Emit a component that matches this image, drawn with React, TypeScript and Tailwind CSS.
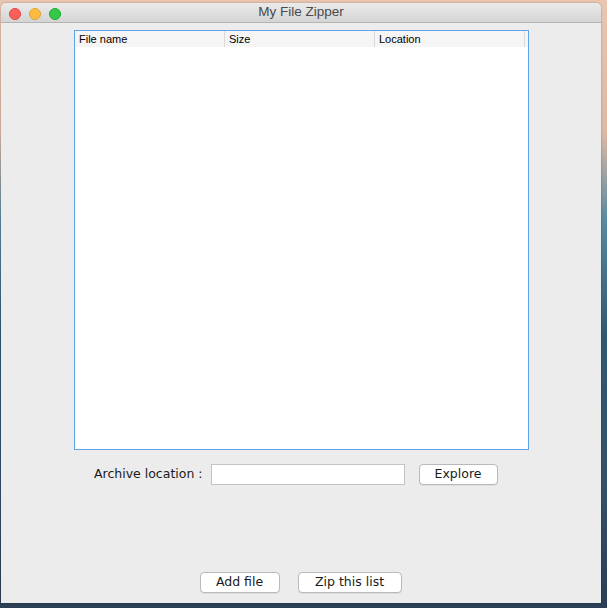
const columns = ['File name', 'Size', 'Location'];

const TrafficLights = () => (
  <div className="absolute left-[8px] top-[5px] flex gap-[8px]">
    <span className="h-[12px] w-[12px] rounded-full border border-[#e0443e] bg-[#fc605c]" />
    <span className="h-[12px] w-[12px] rounded-full border border-[#dea236] bg-[#fdbc40]" />
    <span className="h-[12px] w-[12px] rounded-full border border-[#1aab29] bg-[#34c84a]" />
  </div>
);

const MacButton = ({ label, width }: { label: string; width: string }) => (
  <button
    className={`${width} h-[21px] rounded-[4px] border border-[#b9b9b9] bg-white font-['DejaVu_Sans',sans-serif] text-[12.5px] leading-none text-[#1a1a1a] shadow-[0_1px_0_rgba(0,0,0,0.06)]`}
  >
    {label}
  </button>
);

export default function App() {
  return (
    <div
      className="h-[608px] w-[607px] overflow-hidden bg-[linear-gradient(to_bottom,#e9c6b0_0%,#dcb8a5_22%,#5a8aa0_36%,#2f5a72_55%,#34506a_80%,#2b3f55_100%)]"
      style={{ fontFamily: '"Liberation Sans", Arial, sans-serif' }}
    >
      <div className="ml-[1px] mt-[3px] flex h-[600px] w-[600px] flex-col overflow-hidden rounded-t-[5px] bg-[#ececec] shadow-[0_0_2px_rgba(0,0,0,0.35)]">
        {/* title bar */}
        <div className="relative flex h-[20px] shrink-0 items-center justify-center border-b border-[#b4b4b4] bg-[linear-gradient(to_bottom,#ebebeb,#d4d4d4)]">
          <TrafficLights />
          <span className="text-[13.5px] text-[#4a4a4a]">My File Zipper</span>
        </div>

        {/* table */}
        <div className="ml-[73px] mt-[7px] h-[420px] w-[455px] border border-[#5ea4ea] bg-white">
          <div className="flex h-[16px] bg-[#f5f5f5]">
            {columns.map((c) => (
              <div
                key={c}
                className="flex w-[150px] items-center border-r border-[#dadada] pl-[4px] text-[11px] leading-none text-black"
              >
                {c}
              </div>
            ))}
          </div>
        </div>

        {/* archive location row */}
        <div className="ml-[93px] mt-[13px] flex items-center">
          <span className="font-['DejaVu_Sans',sans-serif] text-[12.5px] text-[#1a1a1a]">Archive location :</span>
          <input
            className="ml-[8px] h-[21px] w-[194px] border border-[#c3c3c3] bg-white outline-none"
            readOnly
          />
          <div className="ml-[14px] -mt-[2px]">
            <MacButton label="Explore" width="w-[79px]" />
          </div>
        </div>

        {/* bottom buttons */}
        <div className="mt-auto mb-[10px] flex justify-center gap-[18px] pr-[1px]">
          <MacButton label="Add file" width="w-[80px]" />
          <MacButton label="Zip this list" width="w-[104px]" />
        </div>
      </div>
    </div>
  );
}
